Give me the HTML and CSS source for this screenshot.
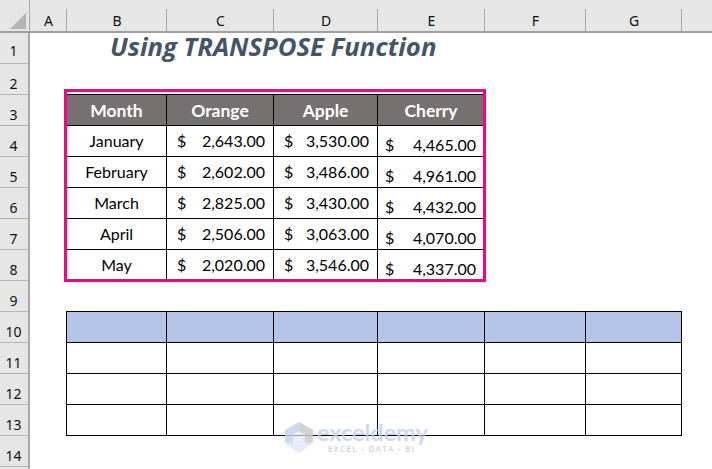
FILE: index.html
```html
<!DOCTYPE html>
<html lang="en">
<head>
<meta charset="utf-8">
<title>Using TRANSPOSE Function</title>
<link rel="stylesheet" href="styles.css">
</head>
<body>
<div class="sheet">
  <div class="corner"><svg class="corner-icon" width="16" height="16" viewBox="0 0 16 16"><polygon points="16,0 16,16 0,16" fill="#b4b4b4"/></svg></div>
  <div class="col-head">A</div><div class="col-head">B</div><div class="col-head">C</div><div class="col-head">D</div><div class="col-head">E</div><div class="col-head">F</div><div class="col-head">G</div><div class="col-head col-rest"></div>

  <div class="row-heads">
    <div class="row-head">1</div><div class="row-head">2</div><div class="row-head">3</div><div class="row-head">4</div><div class="row-head">5</div><div class="row-head">6</div><div class="row-head">7</div><div class="row-head">8</div><div class="row-head">9</div><div class="row-head">10</div><div class="row-head">11</div><div class="row-head">12</div><div class="row-head">13</div><div class="row-head">14</div>
  </div>

  <div class="canvas">
    <h1 class="title">Using TRANSPOSE Function</h1>

    <div class="source">
      <div class="th">Month</div><div class="th">Orange</div><div class="th">Apple</div><div class="th">Cherry</div>
      <div class="td name">January</div><div class="td money"><span>$</span><span>2,643.00</span></div><div class="td money"><span>$</span><span>3,530.00</span></div><div class="td money low"><span>$</span><span>4,465.00</span></div>
      <div class="td name">February</div><div class="td money"><span>$</span><span>2,602.00</span></div><div class="td money"><span>$</span><span>3,486.00</span></div><div class="td money low"><span>$</span><span>4,961.00</span></div>
      <div class="td name">March</div><div class="td money"><span>$</span><span>2,825.00</span></div><div class="td money"><span>$</span><span>3,430.00</span></div><div class="td money low"><span>$</span><span>4,432.00</span></div>
      <div class="td name">April</div><div class="td money"><span>$</span><span>2,506.00</span></div><div class="td money"><span>$</span><span>3,063.00</span></div><div class="td money low"><span>$</span><span>4,070.00</span></div>
      <div class="td name">May</div><div class="td money"><span>$</span><span>2,020.00</span></div><div class="td money"><span>$</span><span>3,546.00</span></div><div class="td money low"><span>$</span><span>4,337.00</span></div>
      <div class="highlight"></div>
    </div>

    <div class="target">
      <div class="tb"></div><div class="tb"></div><div class="tb"></div><div class="tb"></div><div class="tb"></div><div class="tb"></div>
      <div class="tc"></div><div class="tc"></div><div class="tc"></div><div class="tc"></div><div class="tc"></div><div class="tc"></div>
      <div class="tc"></div><div class="tc"></div><div class="tc"></div><div class="tc"></div><div class="tc"></div><div class="tc"></div>
      <div class="tc"></div><div class="tc"></div><div class="tc"></div><div class="tc"></div><div class="tc"></div><div class="tc"></div>
    </div>

    <div class="watermark">
      <svg class="wm-icon" width="28" height="31" viewBox="0 0 28 31">
        <polygon points="14,0 0,8 0,20 8,24 8,13 14,9" fill="#c3d2f2" fill-opacity="0.85"/>
        <polygon points="14,0 28,8 28,20 20,24 20,13 14,9" fill="#c9cbd0" fill-opacity="0.85"/>
        <polygon points="14,9 20,13 20,20 14,17 8,20 8,13" fill="#dfe3ea" fill-opacity="0.7"/>
        <polygon points="0,22 14,31 28,22 14,18" fill="#e3eaf7" fill-opacity="0.85"/>
      </svg>
      <div class="wm-text">
        <div class="wm-name">exceldemy</div>
        <div class="wm-sub">EXCEL - DATA - BI</div>
      </div>
    </div>
  </div>
</div>
</body>
</html>
```
FILE: styles.css
```css
* { box-sizing: border-box; }
html, body { margin: 0; padding: 0; background: #fff; }
body { width: 712px; height: 469px; overflow: hidden; font-family: "Lato", "Liberation Sans", sans-serif; color: #000; }

.sheet {
  display: grid;
  grid-template-columns: 30px 37px 100px 107px 104px 107px 101px 96px 30px;
  grid-template-rows: 33px 436px;
  width: 712px;
  height: 469px;
}

.corner {
  background: #e6e6e6;
  border-right: 1px solid #a8a8a8;
  border-bottom: 2px solid #a0a0a0;
  display: flex;
  align-items: flex-end;
  justify-content: flex-end;
  padding: 0 3px 2px 0;
}
.col-head {
  background: #e6e6e6;
  border-bottom: 2px solid #a0a0a0;
  font-family: "Noto Sans", "Open Sans", sans-serif;
  font-size: 14px;
  line-height: 31px;
  padding-top: 5px;
  text-align: center;
  color: #111;
  background-image: linear-gradient(#a8a8a8, #a8a8a8);
  background-size: 1px 22px;
  background-position: right 0 top 9px;
  background-repeat: no-repeat;
}
.col-rest { background-image: none; }

.row-heads {
  background: #e6e6e6;
  border-right: 2px solid #a8a8a8;
  display: grid;
  grid-auto-rows: 31px;
  align-content: start;
}
.row-head {
  border-bottom: 1px solid #b4b4b4;
  font-family: "Noto Sans", "Open Sans", sans-serif;
  font-size: 14px;
  line-height: 19px;
  padding: 10px 1px 0 0;
  text-align: center;
  color: #111;
}
.row-head:first-child { padding-top: 8px; }

.canvas {
  grid-column: 2 / -1;
  display: flex;
  flex-direction: column;
  align-items: flex-start;
  position: relative;
  background: #fff;
  min-width: 0;
}

.title {
  margin: 0 0 0 80px;
  height: 30px;
  font-family: "Open Sans", "Noto Sans", sans-serif;
  font-size: 25.7px;
  line-height: 28px;
  font-weight: 700;
  font-style: italic;
  color: #44546a;
  white-space: nowrap;
}

.source {
  position: relative;
  margin: 31px 0 0 36px;
  display: grid;
  grid-template-columns: 100px 107px 104px 107px;
  grid-template-rows: repeat(6, 31px);
  border-top: 1px solid #000;
  border-left: 1px solid #000;
}
.highlight {
  position: absolute;
  left: -3px;
  right: -1px;
  top: -6px;
  bottom: -1px;
  border: 3px solid #fb0080;
  pointer-events: none;
}
.th, .td {
  border-right: 1px solid #000;
  border-bottom: 1px solid #000;
  font-size: 16px;
  line-height: 30px;
}
.th {
  background: #767171;
  color: #fff;
  font-weight: 700;
  text-align: center;
  font-size: 17.5px;
  line-height: 32px;
}
.td { background: #fff; }
.name { text-align: center; }
.money {
  display: flex;
  justify-content: space-between;
  padding: 0 8px 0 10px;
}
.low { line-height: 38px; padding-left: 7px; }

.target {
  margin: 30px 0 0 36px;
  display: grid;
  grid-template-columns: 100px 107px 104px 107px 101px 96px;
  grid-template-rows: repeat(4, 31px);
  border-top: 1px solid #000;
  border-left: 1px solid #000;
}
.tb, .tc { border-right: 1px solid #000; border-bottom: 1px solid #000; }
.tb { background: #b4c6e7; }
.tc { background: #fff; }

.watermark {
  position: absolute;
  left: 255px;
  top: 388px;
  display: flex;
  gap: 4px;
}
.wm-icon { margin-top: 1px; }
.wm-text { display: flex; flex-direction: column; align-items: flex-start; }
.wm-name {
  font-size: 23.4px;
  line-height: 23px;
  font-weight: 700;
  color: rgba(190, 206, 242, 0.8);
}
.wm-sub {
  margin-left: 11px;
  font-family: "Open Sans", sans-serif;
  font-size: 8px;
  line-height: 9px;
  letter-spacing: 1.3px;
  font-weight: 600;
  color: #d2d3d7;
  white-space: nowrap;
}
```
